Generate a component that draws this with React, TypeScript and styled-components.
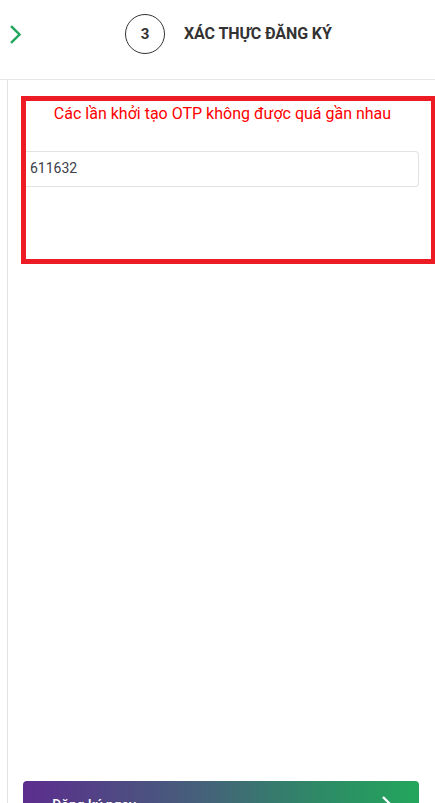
import React from 'react';
import styled, { createGlobalStyle } from 'styled-components';

const GlobalStyle = createGlobalStyle`
  html, body {
    margin: 0;
    padding: 0;
    background: #ffffff;
    font-family: Roboto, "Noto Sans", "Liberation Sans", sans-serif;
    overflow: hidden;
  }
  * { box-sizing: border-box; }
`;

const Page = styled.div`
  width: 100%;
  height: 100vh;
  display: flex;
  flex-direction: column;
`;

const Header = styled.header`
  height: 80px;
  flex-shrink: 0;
  display: flex;
  align-items: center;
  border-bottom: 1px solid #e6e6e6;
`;

const BackButton = styled.button`
  border: 0;
  background: none;
  padding: 0;
  margin: -11px 0 0 8px;
  width: 16px;
  height: 22px;
  display: flex;
  align-items: center;
  justify-content: center;
  cursor: pointer;
`;

const StepWrap = styled.div`
  display: flex;
  align-items: center;
  gap: 19px;
  margin-left: 101px;
  margin-top: -12px;
`;

const StepCircle = styled.div`
  width: 40px;
  height: 40px;
  border-radius: 50%;
  border: 1px solid #333333;
  display: flex;
  align-items: center;
  justify-content: center;
  font-size: 15px;
  font-weight: 700;
  color: #333333;
`;

const StepTitle = styled.h1`
  margin: 0;
  font-size: 16px;
  font-weight: 700;
  color: #333333;
  letter-spacing: -0.1px;
`;

const Body = styled.div`
  flex: 1;
  display: flex;
`;

const Rail = styled.div`
  width: 8px;
  flex-shrink: 0;
  border-right: 1px solid #e3e3e3;
`;

const Main = styled.main`
  flex: 1;
  padding: 0 16px 0 15px;
  display: flex;
  flex-direction: column;
`;

const Form = styled.section`
  min-height: 701px;
  padding-top: 16px;
`;

const OutlineBox = styled.div`
  margin: 0 -17px 0 -2px;
  height: 168px;
  border: 5px solid #ed1c24;
  padding: 3px 12px 0 0;
`;

const ErrorText = styled.p`
  margin: 0;
  text-align: center;
  color: #ff0000;
  font-size: 16px;
  line-height: 20px;
`;

const OtpInput = styled.input`
  display: block;
  width: 100%;
  height: 36px;
  margin-top: 27px;
  border: 1px solid #e2e2e2;
  border-left: 0;
  border-radius: 0 4px 4px 0;
  padding: 0 4px 2px;
  font-family: inherit;
  font-size: 14px;
  color: #3c4048;
  outline: none;
  background: #fff;
`;

const SubmitButton = styled.button`
  height: 48px;
  width: 100%;
  border: 0;
  border-radius: 4px;
  background: linear-gradient(90deg, #5c2d8e 0%, #45617a 45%, #2e8a66 75%, #23a65c 100%);
  color: #ffffff;
  font-family: inherit;
  font-size: 14px;
  font-weight: 500;
  display: flex;
  align-items: center;
  justify-content: space-between;
  padding: 0 26px 0 29px;
  cursor: pointer;
  flex-shrink: 0;
`;

const Chevron = ({ color, size }: { color: string; size: number }) => (
  <svg width={size * 0.6} height={size} viewBox="0 0 12 20" fill="none">
    <path d="M2 2 L10 10 L2 18" stroke={color} strokeWidth="2.6" strokeLinecap="square" />
  </svg>
);

const App: React.FC = () => {
  return (
    <>
      <GlobalStyle />
      <Page>
        <Header>
          <BackButton aria-label="back">
            <Chevron color="#22a65d" size={19} />
          </BackButton>
          <StepWrap>
            <StepCircle>3</StepCircle>
            <StepTitle>XÁC THỰC ĐĂNG KÝ</StepTitle>
          </StepWrap>
        </Header>
        <Body>
          <Rail />
          <Main>
            <Form>
              <OutlineBox>
                <ErrorText>Các lần khởi tạo OTP không được quá gần nhau</ErrorText>
                <OtpInput defaultValue="611632" />
              </OutlineBox>
            </Form>
            <SubmitButton>
              <span>Đăng ký ngay</span>
              <Chevron color="#ffffff" size={18} />
            </SubmitButton>
          </Main>
        </Body>
      </Page>
    </>
  );
};

export default App;
